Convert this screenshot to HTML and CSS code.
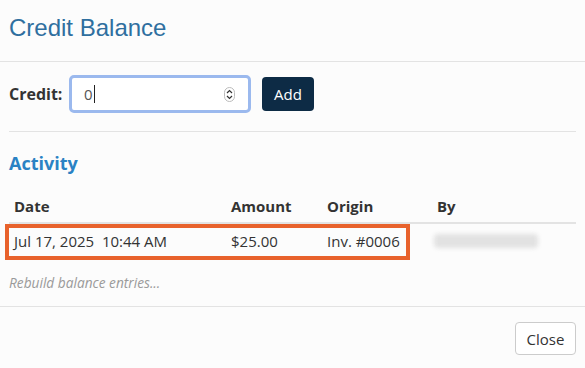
FILE: index.html
```html
<!DOCTYPE html>
<html lang="en">
<head>
    <meta charset="UTF-8">
    <meta name="viewport" content="width=device-width, initial-scale=1.0">
    <title>Credit Balance</title>
    <link rel="stylesheet" href="styles.css">
</head>
<body>
    <div class="modal-header">
        <h1 class="modal-title">Credit Balance</h1>
    </div>

    <div class="modal-body">
        <div class="credit-row">
            <label class="credit-label">Credit:</label>
            <div class="credit-input">
                <span class="input-value">0</span><span class="caret"></span>
                <svg class="spinner" width="11" height="15" viewBox="0 0 11 15">
                    <rect x="0.5" y="0.5" width="10" height="14" rx="5" fill="#fff" stroke="#bbb"/>
                    <path d="M3 6 L5.5 3.5 L8 6" fill="none" stroke="#333" stroke-width="1.2"/>
                    <path d="M3 9 L5.5 11.5 L8 9" fill="none" stroke="#333" stroke-width="1.2"/>
                </svg>
            </div>
            <button class="btn-add">Add</button>
        </div>

        <hr class="divider">

        <h2 class="section-title">Activity</h2>

        <div class="table-wrap">
            <table class="activity">
                <thead>
                    <tr>
                        <th class="col-date">Date</th>
                        <th class="col-amount">Amount</th>
                        <th class="col-origin">Origin</th>
                        <th class="col-by">By</th>
                    </tr>
                </thead>
                <tbody>
                    <tr>
                        <td>Jul 17, 2025&nbsp; 10:44 AM</td>
                        <td>$25.00</td>
                        <td>Inv. #0006</td>
                        <td><div class="blurred"></div></td>
                    </tr>
                </tbody>
            </table>
            <div class="highlight"></div>
        </div>

        <p class="rebuild">Rebuild balance entries...</p>
    </div>

    <div class="modal-footer">
        <button class="btn-close">Close</button>
    </div>
</body>
</html>
```

FILE: styles.css
```css
body {
    margin: 0;
    background-color: #fcfcfc;
    font-family: 'Open Sans', 'Noto Sans', sans-serif;
    color: #333;
}
.modal-header {
    height: 62px;
    padding: 0 9px;
    border-bottom: 1px solid #e3e3e3;
    box-sizing: border-box;
}
.modal-title {
    margin: 0;
    padding-top: 14px;
    font-family: 'Liberation Sans', Arial, sans-serif;
    font-weight: 400;
    font-size: 24px;
    line-height: 28px;
    color: #2f6f9f;
}
.modal-body {
    padding: 0 9px;
}
.credit-row {
    display: flex;
    align-items: center;
    padding-top: 13px;
}
.credit-label {
    font-weight: 700;
    font-size: 16px;
    color: #333;
    width: 60px;
}
.credit-input {
    display: flex;
    align-items: center;
    width: 182px;
    height: 38px;
    box-sizing: border-box;
    border: 3px solid #9bb9ee;
    border-radius: 5px;
    background: #fff;
    padding: 0 13px 0 12px;
    font-size: 15px;
}
.input-value {
    color: #555;
}
.caret {
    width: 1px;
    height: 18px;
    background: #222;
    margin-left: 1px;
}
.spinner {
    margin-left: auto;
}
.btn-add {
    margin-left: 11px;
    width: 52px;
    height: 34px;
    border: none;
    border-radius: 4px;
    background-color: #0d2b45;
    color: #fff;
    font-family: inherit;
    font-size: 15px;
}
.divider {
    border: none;
    border-top: 1px solid #e3e3e3;
    margin: 18px 0 0;
}
.section-title {
    margin: 19px 0 0;
    font-size: 18px;
    line-height: 24px;
    font-weight: 700;
    color: #2a82c4;
}
.table-wrap {
    position: relative;
    margin-top: 20px;
}
.activity {
    width: 100%;
    border-collapse: collapse;
    font-size: 15px;
}
.activity th {
    text-align: left;
    font-weight: 700;
    padding: 1px 5px 6px;
    line-height: 20px;
    border-bottom: 2px solid #e3e3e3;
}
.activity td {
    padding: 7px 5px 8px;
    line-height: 20px;
    color: #333;
}
.col-date { width: 207px; }
.col-amount { width: 86px; }
.col-origin { width: 100px; }
.blurred {
    width: 104px;
    height: 14px;
    margin-left: -3px;
    background: #e2e2e2;
    border-radius: 4px;
    filter: blur(2px);
}
.highlight {
    position: absolute;
    left: -4px;
    top: 29px;
    width: 405px;
    height: 36px;
    box-sizing: border-box;
    border: 4px solid #e8622c;
}
.rebuild {
    margin: 14px 0 0;
    font-size: 13.7px;
    font-style: italic;
    color: #9a9a9a;
}
.modal-footer {
    margin-top: 14px;
    border-top: 1px solid #e3e3e3;
    padding: 15px 9px;
    display: flex;
    justify-content: flex-end;
}
.btn-close {
    width: 61px;
    height: 33px;
    border: 1px solid #ccc;
    border-radius: 4px;
    background: #fff;
    color: #333;
    font-family: inherit;
    font-size: 15px;
}
```
